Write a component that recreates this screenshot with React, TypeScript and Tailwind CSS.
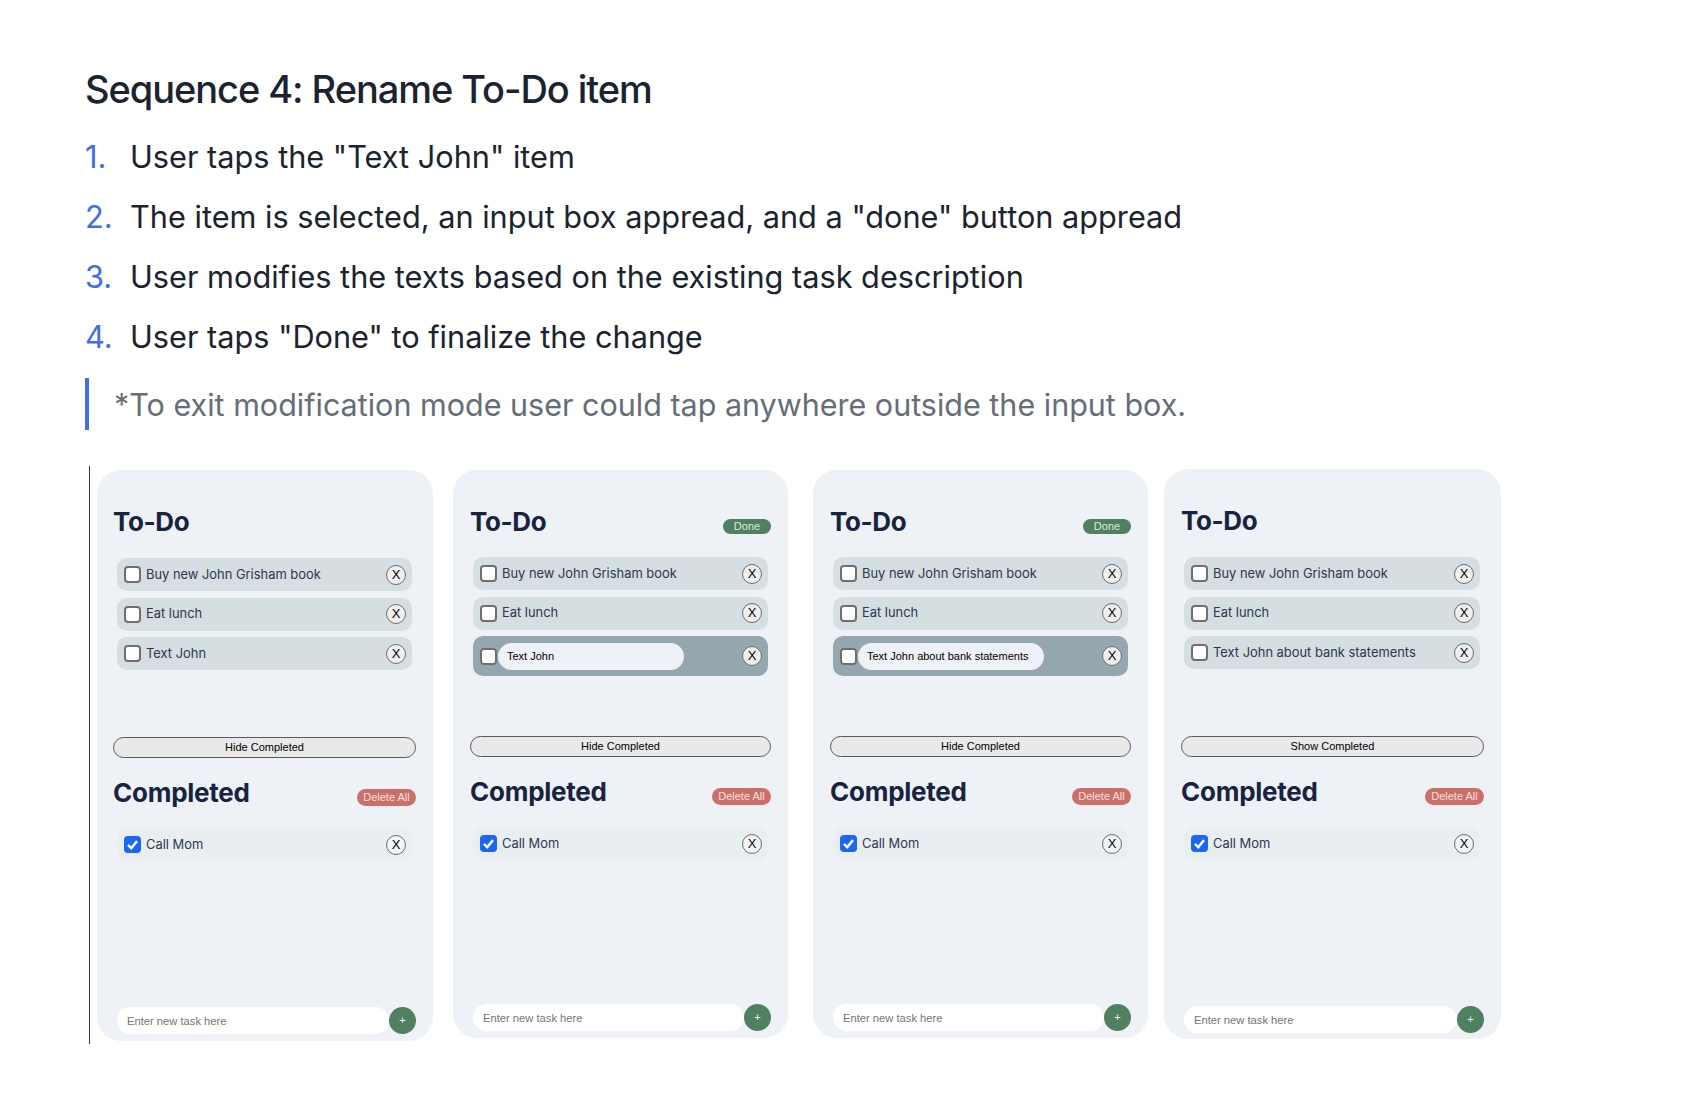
import React from 'react';

type Task = { label: string; editing?: boolean };

interface PhoneProps {
  cardClass: string;
  columnClass: string;
  listClass: string;
  rowClass: string;
  composerClass: string;
  tasks: Task[];
  toggleLabel: string;
  showDone?: boolean;
}

const steps = [
  'User taps the "Text John" item',
  'The item is selected, an input box appread, and a "done" button appread',
  'User modifies the texts based on the existing task description',
  'User taps "Done" to finalize the change',
];

function Checkbox({ checked }: { checked?: boolean }) {
  if (checked) {
    return (
      <span className="flex h-[17px] w-[17px] shrink-0 items-center justify-center rounded-[4px] bg-[#1b66f2]">
        <svg viewBox="0 0 16 16" className="h-[15px] w-[15px]" fill="none">
          <path d="M3.2 8.4 6.6 12 12.8 4.4" stroke="#fff" strokeWidth="2.6" />
        </svg>
      </span>
    );
  }
  return <span className="h-[17px] w-[17px] shrink-0 rounded-[4px] border-2 border-[#6f6f6f] bg-white" />;
}

function RemoveButton({ light }: { light?: boolean }) {
  return (
    <button
      className={`ml-auto flex h-5 w-5 shrink-0 items-center justify-center rounded-full border-[1.5px] border-[#6b6b6b] font-['Liberation_Sans',sans-serif] text-[13px] text-black ${
        light ? 'bg-[#f2f4f6]' : 'bg-[#efefef]'
      }`}
    >
      X
    </button>
  );
}

function TaskRow({ task, rowClass }: { task: Task; rowClass: string }) {
  if (task.editing) {
    return (
      <div className={`flex h-10 items-center rounded-[10px] bg-[#95a7ae] pl-[7px] pr-[6px] ${rowClass}`}>
        <Checkbox />
        <input
          readOnly
          value={task.label}
          className="ml-px h-[27px] w-[186px] rounded-full bg-[#eef1f6] pl-[9px] font-['Liberation_Sans',sans-serif] text-[11px] text-black outline-none"
        />
        <RemoveButton />
      </div>
    );
  }
  return (
    <div className={`flex h-[33px] items-center rounded-[10px] bg-[#d5dee1] pl-[7px] pr-[6px] ${rowClass}`}>
      <Checkbox />
      <span className="ml-[5px] text-[12.9px] text-[#2b3950]">{task.label}</span>
      <RemoveButton />
    </div>
  );
}

function Phone({ cardClass, columnClass, listClass, rowClass, composerClass, tasks, toggleLabel, showDone }: PhoneProps) {
  return (
    <section className={`flex shrink-0 flex-col rounded-[24px] bg-[#eef1f6] ${cardClass}`}>
      <div className={`flex h-full flex-col ${columnClass}`}>
        <div className="flex h-10 items-start justify-between">
          <h2 className="text-[26px] font-[750] leading-10 tracking-[-0.015em] text-[#17233f]">To-Do</h2>
          {showDone && (
            <button className="mt-[17px] h-[15px] w-12 rounded-full bg-[#4f8060] font-['Liberation_Sans',sans-serif] text-[11px] leading-[15px] text-[#dce8e0]">
              Done
            </button>
          )}
        </div>

        <div className={`flex flex-col gap-[6.5px] ${listClass}`}>
          {tasks.map((task) => (
            <TaskRow key={task.label} task={task} rowClass={rowClass} />
          ))}
        </div>

        <button className="h-[21px] shrink-0 rounded-full border border-[#5a5a5a] bg-[#e9e9e9] font-['Liberation_Sans',sans-serif] text-[11px] leading-[19px] text-black">
          {toggleLabel}
        </button>

        <div className="mt-[15px] flex h-10 items-start justify-between">
          <h2 className="text-[26px] font-[750] leading-10 tracking-[-0.01em] text-[#17233f]">Completed</h2>
          <button className="mt-4 h-[17px] w-[59px] rounded-full bg-[#cd6f69] font-['Liberation_Sans',sans-serif] text-[11px] leading-[17px] text-[#f5e1df]">
            Delete All
          </button>
        </div>

        <div className={`mt-[15px] flex h-[33px] items-center rounded-[10px] bg-[#e9eef1] pl-[7px] pr-[6px] ${rowClass}`}>
          <Checkbox checked />
          <span className="ml-[5px] text-[12.9px] text-[#2b3950]">Call Mom</span>
          <RemoveButton light />
        </div>

        <div className={`mt-auto flex items-center ${composerClass}`}>
          <input
            readOnly
            placeholder="Enter new task here"
            className="h-[27px] min-w-0 flex-1 rounded-full bg-white pl-[10px] font-['Liberation_Sans',sans-serif] text-[11.2px] outline-none placeholder:text-[#757575]"
          />
          <button className="h-[27px] w-[27px] shrink-0 rounded-full bg-[#4f8060] font-['Liberation_Sans',sans-serif] text-[11px] text-white">
            +
          </button>
        </div>
      </div>
    </section>
  );
}

export default function App() {
  const base: Task[] = [{ label: 'Buy new John Grisham book' }, { label: 'Eat lunch' }];

  return (
    <main className="min-h-[1112px] bg-white pl-[85px] pt-[67px] font-['Inter',sans-serif]">
      <h1 className="text-[38px] font-medium leading-[44px] tracking-[-0.028em] text-[#1c2330]">
        Sequence 4: Rename To-Do item
      </h1>

      <ol className="mt-4">
        {steps.map((step, i) => (
          <li key={step} className="flex text-[30.7px] leading-[60px] text-[#1c2330]">
            <span className="w-[45px] text-[#3b6ef0]">{i + 1}.</span>
            <span>{step}</span>
          </li>
        ))}
      </ol>

      <blockquote className="mt-[11px] flex h-[52px] items-center border-l-4 border-[#3b6ef0] pl-[25px] pt-px text-[30.5px] text-[#666d78]">
        *To exit modification mode user could tap anywhere outside the input box.
      </blockquote>

      <div className="ml-1 mt-9 flex h-[578px] items-start border-l border-[#333] pl-[7px] pt-1">
        <Phone
          cardClass="h-[571px] w-[336px] pt-8 pb-[7px]"
          columnClass="ml-4 w-[303px]"
          listClass="mt-4 h-[179px]"
          rowClass="ml-1 w-[295px]"
          composerClass="ml-1"
          tasks={[...base, { label: 'Text John' }]}
          toggleLabel="Hide Completed"
        />
        <Phone
          cardClass="ml-5 h-[568px] w-[335px] pt-8 pb-[7px]"
          columnClass="ml-[17px] w-[301px]"
          listClass="mt-[15px] h-[179px]"
          rowClass="ml-[3px] w-[295px]"
          composerClass="ml-[3px]"
          tasks={[...base, { label: 'Text John', editing: true }]}
          toggleLabel="Hide Completed"
          showDone
        />
        <Phone
          cardClass="ml-[25px] h-[568px] w-[335px] pt-8 pb-[7px]"
          columnClass="ml-[17px] w-[301px]"
          listClass="mt-[15px] h-[179px]"
          rowClass="ml-[3px] w-[295px]"
          composerClass="ml-[3px]"
          tasks={[...base, { label: 'Text John about bank statements', editing: true }]}
          toggleLabel="Hide Completed"
          showDone
        />
        <Phone
          cardClass="ml-4 -mt-px h-[570px] w-[337px] pt-8 pb-[6px]"
          columnClass="ml-[17px] w-[303px]"
          listClass="mt-4 h-[179px]"
          rowClass="ml-[3px] w-[296px]"
          composerClass="ml-[3px]"
          tasks={[...base, { label: 'Text John about bank statements' }]}
          toggleLabel="Show Completed"
        />
      </div>
    </main>
  );
}
